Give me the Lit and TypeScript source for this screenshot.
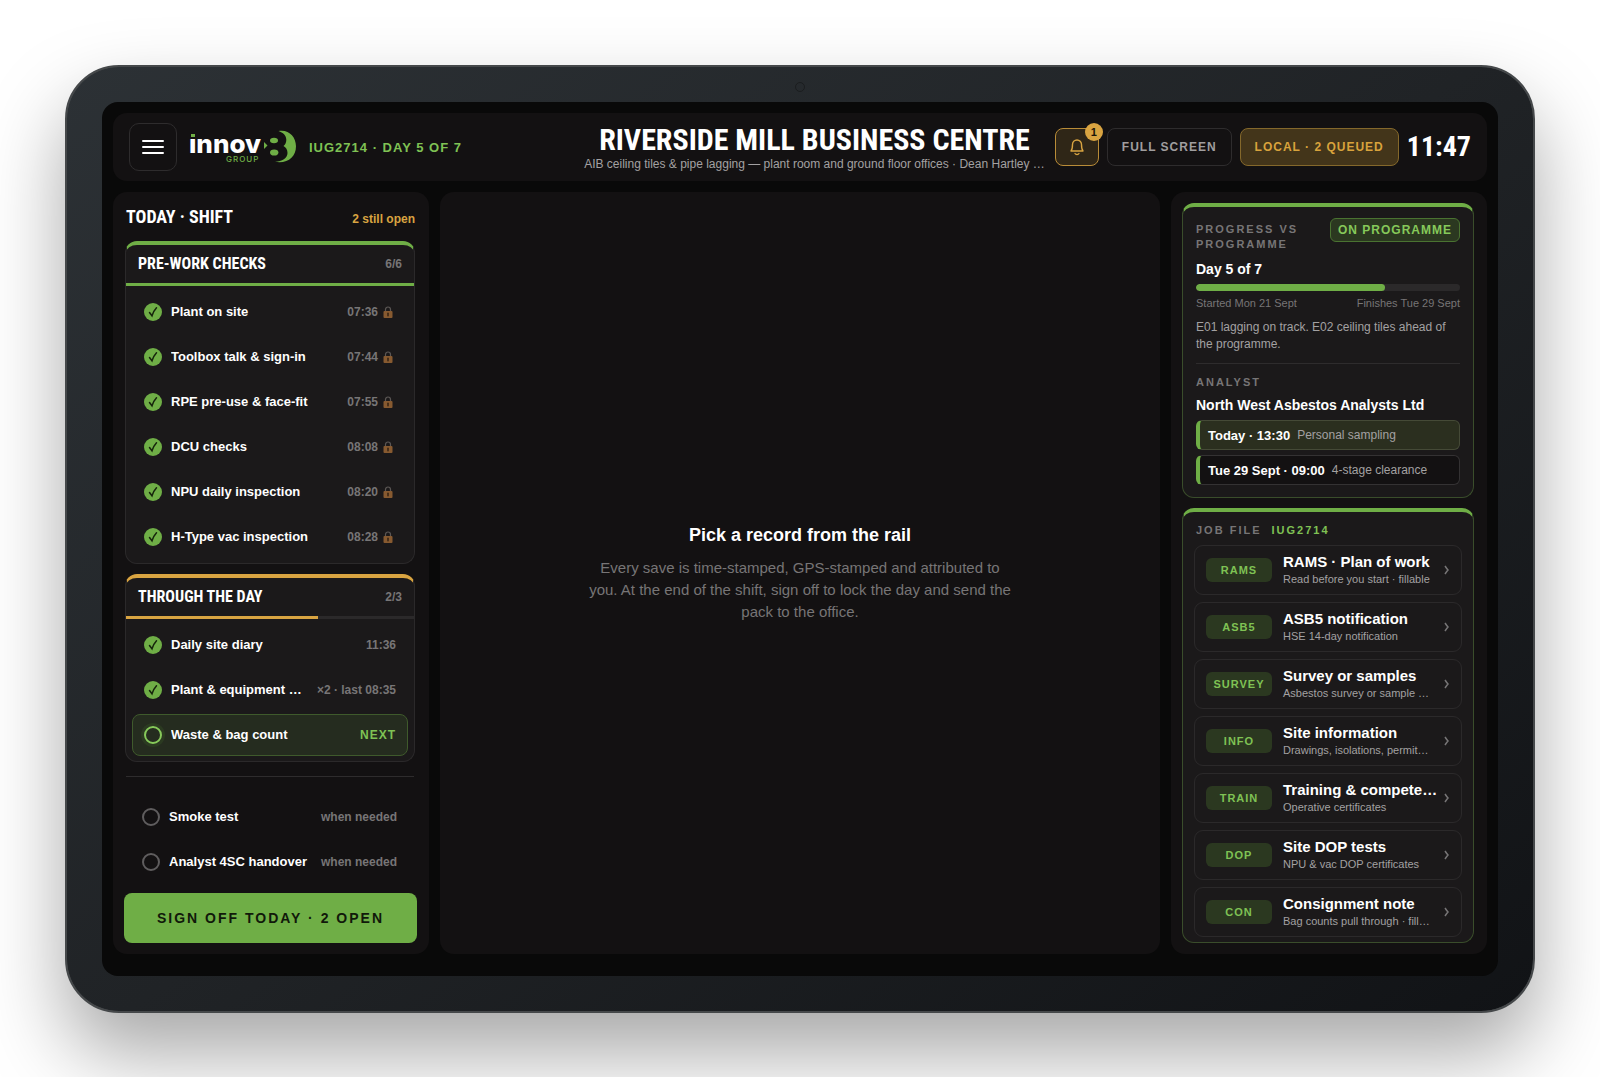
import { LitElement, html, css, svg, nothing } from "lit";
import { customElement, property } from "lit/decorators.js";
import { classMap } from "lit/directives/class-map.js";
import { styleMap } from "lit/directives/style-map.js";

interface RecordRow {
  name: string;
  meta: string;
  state: "done" | "next" | "open";
  locked?: boolean;
}

interface JobFile {
  tag: string;
  title: string;
  note: string;
}

const preWork: RecordRow[] = [
  { name: "Plant on site", meta: "07:36", state: "done", locked: true },
  { name: "Toolbox talk & sign-in", meta: "07:44", state: "done", locked: true },
  { name: "RPE pre-use & face-fit", meta: "07:55", state: "done", locked: true },
  { name: "DCU checks", meta: "08:08", state: "done", locked: true },
  { name: "NPU daily inspection", meta: "08:20", state: "done", locked: true },
  { name: "H-Type vac inspection", meta: "08:28", state: "done", locked: true },
];

const throughDay: RecordRow[] = [
  { name: "Daily site diary", meta: "11:36", state: "done" },
  { name: "Plant & equipment …", meta: "×2 · last 08:35", state: "done" },
  { name: "Waste & bag count", meta: "NEXT", state: "next" },
];

const asNeeded: RecordRow[] = [
  { name: "Smoke test", meta: "when needed", state: "open" },
  { name: "Analyst 4SC handover", meta: "when needed", state: "open" },
];

const jobFiles: JobFile[] = [
  { tag: "RAMS", title: "RAMS · Plan of work", note: "Read before you start · fillable" },
  { tag: "ASB5", title: "ASB5 notification", note: "HSE 14-day notification" },
  { tag: "SURVEY", title: "Survey or samples", note: "Asbestos survey or sample …" },
  { tag: "INFO", title: "Site information", note: "Drawings, isolations, permit…" },
  { tag: "TRAIN", title: "Training & compete…", note: "Operative certificates" },
  { tag: "DOP", title: "Site DOP tests", note: "NPU & vac DOP certificates" },
  { tag: "CON", title: "Consignment note", note: "Bag counts pull through · fill…" },
];

const base = css`
  * {
    box-sizing: border-box;
    margin: 0;
  }
  button {
    font: inherit;
    color: inherit;
    background: none;
    border: 0;
    padding: 0;
    text-align: left;
    cursor: pointer;
  }
  ul {
    list-style: none;
    padding: 0;
  }
`;

@customElement("brand-logo")
export class BrandLogo extends LitElement {
  static styles = css`
    :host {
      display: block;
    }
    svg {
      display: block;
      overflow: visible;
    }
    .word {
      font: 800 26px Inter, sans-serif;
      fill: #fff;
    }
    .group {
      font: 500 8px Inter, sans-serif;
      letter-spacing: 1px;
      fill: #6fae46;
    }
  `;
  render() {
    return html`<svg width="106" height="34" viewBox="0 0 106 34" role="img" aria-label="innov8 group">
      <text class="word" x="-1" y="23">ınnov</text>
      <rect x="1" y="4" width="4" height="3" fill="#6fae46" />
      <text class="group" x="36" y="32">GROUP</text>
      <g transform="translate(-1 0)" fill="#6fae46">
        <path d="M75 12L78.500 15.500L75 19Z" />
        <path
          d="M89.500 1C99.500 -1 107 6.500 107 16.200C107 27 98.500 34 86 31.800C93 31.500 98.500 28 98.500 23C98.500 19.500 97 17.500 94.500 16C96.500 14.500 97.300 12.300 97.300 9.800C97.300 5.500 94 2.500 89.500 1Z"
        />
        <ellipse cx="85" cy="10.500" rx="4" ry="2.800" />
        <ellipse cx="85.200" cy="22.500" rx="4.200" ry="3.100" />
      </g>
    </svg>`;
  }
}

@customElement("top-bar")
export class TopBar extends LitElement {
  static styles = [
    base,
    css`
      :host {
        display: flex;
        align-items: center;
        gap: 10px;
        height: 68px;
        padding: 0 16px;
        border-radius: 14px;
        background: #131112;
      }
      .menu {
        display: grid;
        place-items: center;
        width: 48px;
        height: 48px;
        border: 1px solid #2e2c2d;
        border-radius: 10px;
      }
      .lead {
        flex: 1;
        display: flex;
        align-items: center;
        gap: 13px;
        white-space: nowrap;
      }
      .job {
        font-size: 13px;
        font-weight: 700;
        letter-spacing: 1px;
        color: #7fc254;
      }
      .heading {
        flex: none;
        text-align: center;
        white-space: nowrap;
      }
      h1 {
        font: 700 30px/34px "Liberation Sans Narrow", "Roboto Condensed", sans-serif;
        color: #fff;
      }
      .scope {
        font-size: 12px;
        line-height: 15px;
        color: #a3a1a2;
      }
      .tools {
        display: flex;
        align-items: center;
        gap: 8px;
        white-space: nowrap;
      }
      .tool {
        height: 38px;
        padding: 0 14px;
        border: 1px solid #2e2c2d;
        border-radius: 8px;
        font-size: 12px;
        font-weight: 700;
        letter-spacing: 1px;
        color: #a09e9f;
      }
      .queue {
        border-color: #84682b;
        background: #43351a;
        color: #d9a33c;
      }
      .bell {
        position: relative;
        display: grid;
        place-items: center;
        width: 44px;
        padding: 0;
        border-color: #b98c38;
        background: #2f2617;
      }
      .count {
        position: absolute;
        top: -6px;
        right: -5px;
        width: 18px;
        height: 18px;
        border-radius: 9px;
        background: #d9a441;
        color: #1a1408;
        font-size: 11px;
        line-height: 18px;
        letter-spacing: 0;
        text-align: center;
      }
      time {
        font: 700 28px/32px "Liberation Sans Narrow", "Roboto Condensed", sans-serif;
        color: #fff;
      }
    `,
  ];
  render() {
    return html`
      <div class="lead">
        <button class="menu" aria-label="Menu">
          <svg width="22" height="16" viewBox="0 0 22 16" stroke="#fff" stroke-width="2" stroke-linecap="round">
            <path d="M1 2H21M1 8H21M1 14H21" />
          </svg>
        </button>
        <brand-logo></brand-logo>
        <span class="job">IUG2714 · DAY 5 OF 7</span>
      </div>
      <div class="heading">
        <h1>RIVERSIDE MILL BUSINESS CENTRE</h1>
        <p class="scope">AIB ceiling tiles &amp; pipe lagging — plant room and ground floor offices · Dean Hartley …</p>
      </div>
      <div class="tools">
        <button class="tool bell" aria-label="Notifications">
          <svg width="16" height="18" viewBox="0 0 16 18" fill="none" stroke="#d9a441" stroke-width="1.400" stroke-linecap="round" stroke-linejoin="round">
            <path d="M2 13H14C12.700 11.500 12.500 10 12.500 6.500A4.500 4.500 0 0 0 3.500 6.500C3.500 10 3.300 11.500 2 13Z" />
            <path d="M6 15.500A2.200 1.800 0 0 0 10 15.500" />
          </svg>
          <span class="count">1</span>
        </button>
        <button class="tool">FULL SCREEN</button>
        <button class="tool queue">LOCAL · 2 QUEUED</button>
        <time>11:47</time>
      </div>
    `;
  }
}

@customElement("record-row")
export class RecordRowElement extends LitElement {
  @property({ attribute: false }) row!: RecordRow;
  static styles = [
    base,
    css`
      :host {
        display: block;
      }
      .row {
        display: flex;
        align-items: center;
        gap: 9px;
        width: 100%;
        height: 42px;
        padding: 0 11px;
        border: 1px solid transparent;
        border-radius: 8px;
      }
      .next {
        border-color: #3f5a2c;
        background: #252c1f;
      }
      .mark {
        flex: none;
        display: block;
        width: 18px;
        height: 18px;
        border: 2px solid #5f5d5e;
        border-radius: 9px;
      }
      .done .mark {
        border: 0;
        background: #6fae46;
      }
      .next .mark {
        border-color: #86c95a;
        box-shadow: 0 0 0 3px #31472480;
      }
      .name {
        flex: 1;
        min-width: 0;
        overflow: hidden;
        font-size: 13px;
        font-weight: 700;
        line-height: 20px;
        white-space: nowrap;
        text-overflow: ellipsis;
        color: #fff;
      }
      .meta {
        display: flex;
        align-items: center;
        gap: 5px;
        font-size: 12px;
        font-weight: 700;
        white-space: nowrap;
        color: #777576;
      }
      .next .meta {
        letter-spacing: 1px;
        color: #7fc254;
      }
      .locked {
        padding-right: 3px;
      }
    `,
  ];
  render() {
    const { name, meta, state, locked } = this.row;
    return html`<button class=${classMap({ row: true, [state]: true })}>
      <span class="mark">
        ${state === "done"
          ? svg`<svg width="18" height="18" viewBox="0 0 18 18" fill="none" stroke="#16240c" stroke-width="1.500" stroke-linecap="round"><path d="M5.500 9.500L8 12.800C9 9.500 10.500 7 12.500 4.800"/></svg>`
          : nothing}
      </span>
      <span class="name">${name}</span>
      <span class=${classMap({ meta: true, locked: !!locked })}>
        ${meta}
        ${locked
          ? svg`<svg width="10" height="12" viewBox="0 0 10 12" aria-label="locked"><path d="M2.500 6V3.500A2.500 2.500 0 0 1 7.500 3.500V6" fill="none" stroke="#5b5654" stroke-width="1.200"/><rect x="0.500" y="5" width="9" height="7" rx="1" fill="#875a30"/><path d="M5 7.200V9.800" stroke="#3a2514" stroke-width="1.600" stroke-linecap="round"/></svg>`
          : nothing}
      </span>
    </button>`;
  }
}

@customElement("shift-rail")
export class ShiftRail extends LitElement {
  static styles = [
    base,
    css`
      :host {
        display: flex;
        flex-direction: column;
        padding: 11px 12px 11px 11px;
        border-radius: 14px;
        background: #131112;
      }
      .top {
        display: flex;
        align-items: baseline;
        justify-content: space-between;
        padding: 0 2px;
      }
      h2 {
        font: 700 18px/28px "Liberation Sans Narrow", "Roboto Condensed", sans-serif;
        color: #fff;
      }
      .left {
        font-size: 12px;
        font-weight: 700;
        color: #d9a441;
      }
      .card {
        margin: 10px 2px 0 1px;
        border: 1px solid #2b292a;
        border-top: 4px solid #6fae46;
        border-radius: 12px;
        background: #1b191a;
      }
      .amber {
        border-top-color: #d9a441;
      }
      .head {
        display: flex;
        align-items: center;
        justify-content: space-between;
        height: 38px;
        padding: 0 12px;
      }
      h3 {
        font: 700 16px/24px "Liberation Sans Narrow", "Roboto Condensed", sans-serif;
        color: #fff;
      }
      .tally {
        font-size: 12px;
        font-weight: 700;
        line-height: 24px;
        color: #777576;
      }
      .track {
        height: 3px;
        background: #2b292a;
      }
      .fill {
        height: 3px;
        background: #6fae46;
      }
      .amber .fill {
        background: #d9a441;
      }
      ul {
        display: grid;
        grid-template-columns: minmax(0, 1fr);
        gap: 3px;
        padding: 5px 6px;
      }
      .extra {
        margin: 14px 3px 0 2px;
        padding: 19px 5px 0 4px;
        border-top: 1px solid #2e2c2d;
      }
      .sign {
        height: 50px;
        margin-top: auto;
        border-radius: 8px;
        background: #6fae46;
        color: #11190a;
        font-size: 14px;
        font-weight: 700;
        letter-spacing: 2px;
        text-align: center;
      }
    `,
  ];
  private rows(list: RecordRow[]) {
    return list.map((row) => html`<li><record-row .row=${row}></record-row></li>`);
  }
  private group(title: string, list: RecordRow[], amber = false) {
    const done = list.filter((r) => r.state === "done").length;
    return html`<section class=${classMap({ card: true, amber })}>
      <div class="head">
        <h3>${title}</h3>
        <span class="tally">${done}/${list.length}</span>
      </div>
      <div class="track"><div class="fill" style=${styleMap({ width: `${(done / list.length) * 100}%` })}></div></div>
      <ul>${this.rows(list)}</ul>
    </section>`;
  }
  render() {
    return html`
      <div class="top">
        <h2>TODAY · SHIFT</h2>
        <span class="left">2 still open</span>
      </div>
      ${this.group("PRE-WORK CHECKS", preWork)} ${this.group("THROUGH THE DAY", throughDay, true)}
      <ul class="extra">${this.rows(asNeeded)}</ul>
      <button class="sign">SIGN OFF TODAY · 2 OPEN</button>
    `;
  }
}

@customElement("job-rail")
export class JobRail extends LitElement {
  static styles = [
    base,
    css`
      :host {
        display: flex;
        flex-direction: column;
        gap: 10px;
        padding: 11px 13px 11px 11px;
        border-radius: 14px;
        background: #131112;
      }
      .card {
        border: 1px solid #3a4d2b;
        border-top: 4px solid #6fae46;
        border-radius: 12px;
        background: #1b191a;
        padding: 11px 13px 12px;
      }
      .files {
        flex: 1;
        padding: 11px 11px 5px;
      }
      .split {
        display: flex;
        align-items: flex-start;
        justify-content: space-between;
      }
      .label {
        font-size: 11px;
        font-weight: 700;
        line-height: 15px;
        letter-spacing: 2px;
        color: #777576;
      }
      .progress {
        width: 120px;
        padding-top: 4px;
      }
      .badge {
        height: 24px;
        padding: 0 7px;
        border: 1px solid #4a7331;
        border-radius: 6px;
        background: #2b3820;
        color: #86c95a;
        font-size: 12px;
        font-weight: 700;
        line-height: 22px;
        letter-spacing: 1px;
        white-space: nowrap;
      }
      .strong {
        margin-top: 7px;
        font-size: 14px;
        font-weight: 700;
        line-height: 20px;
        color: #fff;
      }
      .track {
        height: 7px;
        margin-top: 5px;
        overflow: hidden;
        border-radius: 4px;
        background: #2b292a;
      }
      .fill {
        height: 7px;
        border-radius: 4px;
        background: #6fae46;
      }
      .dates {
        margin-top: 4px;
        font-size: 11px;
        line-height: 16px;
        color: #777576;
      }
      .note {
        margin-top: 8px;
        font-size: 12px;
        line-height: 17px;
        color: #a3a1a2;
      }
      .analyst {
        margin-top: 10px;
        padding-top: 11px;
        border-top: 1px solid #2e2c2d;
      }
      .analyst .strong {
        margin-top: 5px;
      }
      .slot {
        display: flex;
        align-items: center;
        gap: 7px;
        height: 30px;
        margin-top: 5px;
        padding: 0 8px;
        border: 1px solid #343233;
        border-left: 4px solid #6fae46;
        border-radius: 6px;
        background: #131112;
        color: #a3a1a2;
        font-size: 12px;
        white-space: nowrap;
      }
      .slot b {
        color: #fff;
        font-size: 13px;
      }
      .today {
        background: #2b2f1f;
        border-color: #454a37;
        border-left-color: #6fae46;
      }
      .files .label {
        padding-left: 2px;
      }
      .code {
        margin-left: 5px;
        color: #7fc254;
      }
      .list {
        display: grid;
        grid-template-columns: minmax(0, 1fr);
        gap: 7px;
        margin-top: 7px;
      }
      .file {
        display: flex;
        align-items: center;
        gap: 11px;
        width: 100%;
        height: 50px;
        padding: 0 11px;
        border: 1px solid #2b292a;
        border-radius: 9px;
      }
      .tag {
        flex: none;
        width: 66px;
        border-radius: 6px;
        background: #2b3820;
        color: #7fc254;
        font-size: 11px;
        font-weight: 700;
        line-height: 24px;
        letter-spacing: 1px;
        text-align: center;
      }
      .text {
        flex: 1;
        min-width: 0;
        white-space: nowrap;
      }
      .title {
        display: block;
        font-size: 15px;
        font-weight: 700;
        line-height: 18px;
        color: #fff;
      }
      .sub {
        display: block;
        font-size: 11px;
        line-height: 16px;
        color: #a3a1a2;
      }
      .chev {
        flex: none;
      }
    `,
  ];
  render() {
    return html`
      <section class="card">
        <div class="split">
          <h2 class="label progress">PROGRESS VS PROGRAMME</h2>
          <span class="badge">ON PROGRAMME</span>
        </div>
        <p class="strong">Day 5 of 7</p>
        <div class="track"><div class="fill" style=${styleMap({ width: `${(5 / 7) * 100}%` })}></div></div>
        <div class="split dates"><span>Started Mon 21 Sept</span><span>Finishes Tue 29 Sept</span></div>
        <p class="note">E01 lagging on track. E02 ceiling tiles ahead of the programme.</p>
        <div class="analyst">
          <h2 class="label">ANALYST</h2>
          <p class="strong">North West Asbestos Analysts Ltd</p>
          <div class="slot today"><b>Today · 13:30</b><span>Personal sampling</span></div>
          <div class="slot"><b>Tue 29 Sept · 09:00</b><span>4-stage clearance</span></div>
        </div>
      </section>
      <section class="card files">
        <h2 class="label">JOB FILE <span class="code">IUG2714</span></h2>
        <ul class="list">
          ${jobFiles.map(
            (f) => html`<li>
              <button class="file">
                <span class="tag">${f.tag}</span>
                <span class="text"><span class="title">${f.title}</span><span class="sub">${f.note}</span></span>
                <svg class="chev" width="7" height="10" viewBox="0 0 7 10" fill="none" stroke="#777576" stroke-width="1.500">
                  <path d="M2 1C3 2.500 4 4 5 5C4 6 3 7.500 2 9" />
                </svg>
              </button>
            </li>`,
          )}
        </ul>
      </section>
    `;
  }
}

@customElement("app-root")
export class AppRoot extends LitElement {
  static styles = [
    base,
    css`
      :host {
        display: block;
        box-sizing: border-box;
        min-height: 100vh;
        padding: 65px;
        overflow: hidden;
        background: #fff;
        font-family: "Liberation Sans", Arial, sans-serif;
      }
      .device {
        position: relative;
        padding: 35px;
        border: 2px solid #45484a;
        border-radius: 54px;
        background: linear-gradient(145deg, #2c3135, #202326 50%, #111316) padding-box, #45484a;
        box-shadow: 0 40px 80px rgba(0, 0, 0, 0.35);
      }
      .camera {
        position: absolute;
        top: 15px;
        left: 50%;
        width: 10px;
        height: 10px;
        margin-left: -5px;
        border: 1px solid #1b1d1f;
        border-radius: 5px;
      }
      .screen {
        display: flex;
        flex-direction: column;
        gap: 11px;
        aspect-ratio: 16 / 10;
        padding: 11px 11px 22px;
        border-radius: 16px;
        background: #090909;
      }
      .body {
        flex: 1;
        display: grid;
        grid-template-columns: 316px minmax(0, 1fr) 316px;
        gap: 11px;
      }
      main {
        display: flex;
        flex-direction: column;
        align-items: center;
        justify-content: center;
        gap: 10px;
        border-radius: 14px;
        background: #131112;
        text-align: center;
      }
      h2 {
        font-size: 18px;
        font-weight: 700;
        line-height: 24px;
        color: #fff;
      }
      .hint {
        width: 428px;
        font-size: 15px;
        line-height: 22px;
        color: #777576;
      }
    `,
  ];
  render() {
    return html`<div class="device">
      <span class="camera"></span>
      <div class="screen">
        <top-bar></top-bar>
        <div class="body">
          <shift-rail></shift-rail>
          <main>
            <h2>Pick a record from the rail</h2>
            <p class="hint">
              Every save is time-stamped, GPS-stamped and attributed to you. At the end of the shift, sign off to lock
              the day and send the pack to the office.
            </p>
          </main>
          <job-rail></job-rail>
        </div>
      </div>
    </div>`;
  }
}
